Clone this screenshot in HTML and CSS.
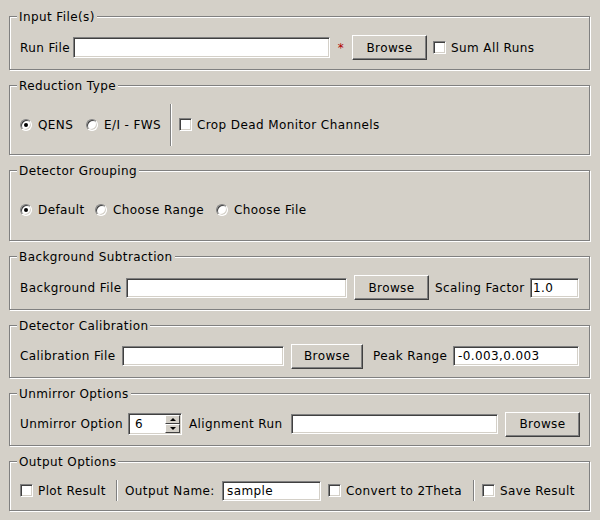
FILE: index.html
```html
<!DOCTYPE html>
<html>
<head>
<meta charset="utf-8">
<link rel="stylesheet" href="styles.css">
</head>
<body>
<div class="panel">

  <section class="group g-input">
    <span class="title">Input File(s)</span>
    <span class="lbl w53">Run File</span>
    <input class="field h21 w257" type="text" value="">
    <span class="req w22">*</span>
    <button class="btn w75">Browse</button>
    <span class="check ml6"></span>
    <span class="txt ml5">Sum All Runs</span>
  </section>

  <section class="group g-reduction">
    <span class="title">Reduction Type</span>
    <span class="radio on"></span>
    <span class="txt ml6 w48">QENS</span>
    <span class="radio"></span>
    <span class="txt ml6 w66">E/I - FWS</span>
    <span class="vsep tall"></span>
    <span class="check ml7"></span>
    <span class="txt ml5">Crop Dead Monitor Channels</span>
  </section>

  <section class="group g-grouping">
    <span class="title">Detector Grouping</span>
    <span class="radio on"></span>
    <span class="txt ml6 w57">Default</span>
    <span class="radio"></span>
    <span class="txt ml6 w103">Choose Range</span>
    <span class="radio"></span>
    <span class="txt ml6">Choose File</span>
  </section>

  <section class="group g-background">
    <span class="title">Background Subtraction</span>
    <span class="lbl w106">Background File</span>
    <input class="field w221" type="text" value="">
    <button class="btn ml7 w75">Browse</button>
    <span class="lbl ml6 w95">Scaling Factor</span>
    <input class="field w49 tight" type="text" value="1.0">
  </section>

  <section class="group g-calibration">
    <span class="title">Detector Calibration</span>
    <span class="lbl w102">Calibration File</span>
    <input class="field w162" type="text" value="">
    <button class="btn ml7 w72">Browse</button>
    <span class="lbl ml10 w80">Peak Range</span>
    <input class="field w126" type="text" value="-0.003,0.003">
  </section>

  <section class="group g-unmirror">
    <span class="title">Unmirror Options</span>
    <span class="lbl w108">Unmirror Option</span>
    <div class="spin">
      <span class="spin-value">6</span>
      <div class="spin-btns">
        <span class="spin-btn"><span class="arrow up"></span></span>
        <span class="spin-btn"><span class="arrow down"></span></span>
      </div>
    </div>
    <span class="lbl ml7 w102">Alignment Run</span>
    <input class="field w207" type="text" value="">
    <button class="btn ml7 w75">Browse</button>
  </section>

  <section class="group g-output">
    <span class="title">Output Options</span>
    <span class="check"></span>
    <span class="txt ml5 w78">Plot Result</span>
    <span class="vsep short"></span>
    <span class="lbl ml7 w97">Output Name:</span>
    <input class="field w99" type="text" value="sample">
    <span class="check ml7"></span>
    <span class="txt ml5 w127">Convert to 2Theta</span>
    <span class="vsep short"></span>
    <span class="check ml7"></span>
    <span class="txt ml5">Save Result</span>
  </section>

</div>
</body>
</html>
```

FILE: styles.css
```css
html, body {
  margin: 0;
  padding: 0;
  background: #d4d0c8;
}

body {
  font-family: "DejaVu Sans", "Liberation Sans", sans-serif;
  font-size: 12px;
  line-height: 14px;
  letter-spacing: 0.4px;
  color: #000;
}

.panel {
  width: 600px;
  height: 520px;
  box-sizing: border-box;
  padding: 16px 10px 0 9px;
  display: flex;
  flex-direction: column;
  gap: 15px;
}

/* etched group box */
.group {
  position: relative;
  box-sizing: border-box;
  flex: none;
  border: 1px solid #808080;
  box-shadow: inset 1px 1px 0 #fff, 1px 1px 0 #fff;
  display: flex;
  align-items: center;
  padding: 9px 10px 0 10px;
}

.g-input { height: 54px; }
.g-reduction { height: 70px; }
.g-grouping { height: 71px; }
.g-background { height: 54px; }
.g-calibration { height: 53px; }
.g-unmirror { height: 53px; }
.g-output { height: 50px; }

.title {
  position: absolute;
  left: 7px;
  top: -7px;
  padding: 0 2px;
  background: #d4d0c8;
  line-height: 14px;
  white-space: nowrap;
}

.lbl, .txt, .req {
  flex: none;
  white-space: nowrap;
}

.req {
  color: #b00000;
  text-align: center;
}

/* sunken line edit */
.field {
  flex: none;
  box-sizing: border-box;
  height: 20px;
  margin: 0;
  padding: 0 0 0 4px;
  font: inherit;
  letter-spacing: inherit;
  color: #000;
  background: #fff;
  border: 1px solid;
  border-color: #808080 #fff #fff #808080;
  box-shadow: inset 1px 1px 0 #404040, inset -1px -1px 0 #d4d0c8;
  outline: none;
  border-radius: 0;
}

.field.tight { padding-left: 2px; }

.h21 { height: 21px; }

/* raised push button */
.btn {
  flex: none;
  box-sizing: border-box;
  height: 25px;
  margin-top: 0;
  margin-bottom: 0;
  padding: 0;
  font: inherit;
  letter-spacing: inherit;
  color: #000;
  background: #d4d0c8;
  border: 1px solid;
  border-color: #fff #404040 #404040 #fff;
  box-shadow: inset -1px -1px 0 #808080;
  border-radius: 0;
  text-align: center;
}

/* checkbox */
.check {
  flex: none;
  box-sizing: border-box;
  width: 13px;
  height: 13px;
  background: #fff;
  border: 1px solid;
  border-color: #808080 #fff #fff #808080;
  box-shadow: inset 1px 1px 0 #404040, inset -1px -1px 0 #d4d0c8;
}

/* radio button */
.radio {
  flex: none;
  position: relative;
  box-sizing: border-box;
  width: 12px;
  height: 12px;
  border-radius: 50%;
  background: #fff;
  border: 1px solid;
  border-color: #808080 #fff #fff #808080;
  box-shadow: inset 1px 1px 0 #404040, inset -1px -1px 0 #d4d0c8;
}

.radio.on::after {
  content: "";
  position: absolute;
  left: 3px;
  top: 3px;
  width: 4px;
  height: 4px;
  border-radius: 50%;
  background: #000;
}

/* sunken vertical separator */
.vsep {
  flex: none;
  box-sizing: border-box;
  width: 2px;
  border-left: 1px solid #808080;
  border-right: 1px solid #fff;
}
.vsep.tall { height: 42px; }
.vsep.short { height: 21px; }

/* spin box */
.spin {
  flex: none;
  box-sizing: border-box;
  width: 54px;
  height: 22px;
  background: #fff;
  border: 1px solid;
  border-color: #808080 #fff #fff #808080;
  box-shadow: inset 1px 1px 0 #404040, inset -1px -1px 0 #d4d0c8;
  display: flex;
  align-items: center;
  padding: 2px 1px 2px 6px;
}

.spin-value {
  flex: 1;
}

.spin-btns {
  flex: none;
  width: 15px;
  height: 18px;
  display: flex;
  flex-direction: column;
}

.spin-btn {
  box-sizing: border-box;
  height: 9px;
  background: #d4d0c8;
  border: 1px solid;
  border-color: #fff #404040 #404040 #fff;
  display: flex;
  align-items: center;
  justify-content: center;
}

.arrow {
  width: 0;
  height: 0;
  border-left: 3px solid transparent;
  border-right: 3px solid transparent;
}
.arrow.up { border-bottom: 3px solid #000; }
.arrow.down { border-top: 3px solid #000; }

/* spacing helpers */
.ml5 { margin-left: 5px; }
.ml6 { margin-left: 6px; }
.ml7 { margin-left: 7px; }
.ml10 { margin-left: 10px; }

.w22 { width: 22px; }
.w48 { width: 48px; }
.w49 { width: 49px; }
.w53 { width: 53px; }
.w57 { width: 57px; }
.w66 { width: 66px; }
.w72 { width: 72px; }
.w75 { width: 75px; }
.w78 { width: 78px; }
.w80 { width: 80px; }
.w95 { width: 95px; }
.w97 { width: 97px; }
.w99 { width: 99px; }
.w102 { width: 102px; }
.w103 { width: 103px; }
.w106 { width: 106px; }
.w108 { width: 108px; }
.w126 { width: 126px; }
.w127 { width: 127px; }
.w162 { width: 162px; }
.w207 { width: 207px; }
.w221 { width: 221px; }
.w257 { width: 257px; }
```
